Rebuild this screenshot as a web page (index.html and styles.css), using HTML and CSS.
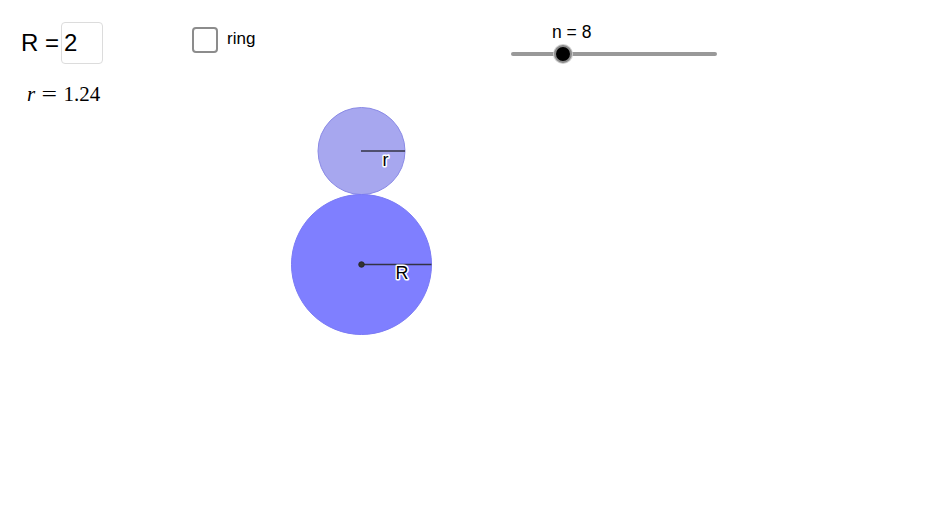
FILE: index.html
```html
<!DOCTYPE html>
<html>
<head>
<meta charset="utf-8">
<link rel="stylesheet" href="styles.css">
</head>
<body>
<div class="applet">
  <svg class="graphics" width="935" height="518" viewBox="0 0 935 518">
    <circle cx="361.5" cy="151" r="43.5" fill="#a7a7ef" stroke="#8a8ae6" stroke-width="1"/>
    <circle cx="361.5" cy="264.5" r="70" fill="#7f7fff" stroke="#7a7af5" stroke-width="1"/>
    <line x1="361" y1="151" x2="405" y2="151" stroke="#333344" stroke-width="1.6"/>
    <line x1="361" y1="264.5" x2="431.5" y2="264.5" stroke="#333344" stroke-width="1.6"/>
    <circle cx="361.5" cy="264.5" r="2.8" fill="#333" stroke="#222" stroke-width="0.8"/>
    <text class="lbl" x="382.5" y="166">r</text>
    <text class="lbl" x="395.5" y="279">R</text>
  </svg>

  <div class="input-widget">
    <span class="input-label">R =</span>
    <span class="input-box">2</span>
  </div>

  <label class="check-widget">
    <span class="check-box"></span>
    <span class="check-label">ring</span>
  </label>

  <div class="slider-widget">
    <div class="slider-caption">n = 8</div>
    <div class="slider-track">
      <span class="slider-knob"></span>
    </div>
  </div>

  <div class="formula"><i class="var">r</i><span class="eq">=</span><span>1.24</span></div>
</div>
</body>
</html>
```

FILE: styles.css
```css
html, body {
  margin: 0;
  padding: 0;
  background: #ffffff;
}
.applet {
  position: relative;
  width: 935px;
  height: 518px;
  overflow: hidden;
  font-family: "Liberation Sans", Arial, sans-serif;
  color: #000;
}
.graphics {
  position: absolute;
  left: 0;
  top: 0;
}
.lbl {
  font-family: "Liberation Sans", Arial, sans-serif;
  font-size: 18px;
  fill: #000;
  stroke: #fff;
  stroke-width: 3px;
  paint-order: stroke;
  stroke-linejoin: round;
}
.input-widget {
  position: absolute;
  left: 21px;
  top: 22px;
  display: flex;
  align-items: center;
  gap: 2px;
}
.input-label {
  font-size: 24px;
}
.input-box {
  box-sizing: border-box;
  width: 42px;
  height: 42px;
  border: 1px solid #dcdcdc;
  border-radius: 4px;
  font-size: 24px;
  line-height: 40px;
  padding-left: 2px;
}
.check-widget {
  position: absolute;
  left: 192px;
  top: 27px;
  display: flex;
  align-items: center;
  gap: 9px;
}
.check-box {
  box-sizing: border-box;
  width: 26px;
  height: 26px;
  border: 2px solid #8c8c8c;
  border-radius: 4px;
}
.check-label {
  font-size: 17px;
  margin-top: -2px;
}
.slider-widget {
  position: absolute;
  left: 511px;
  top: 22px;
  width: 206px;
}
.slider-caption {
  font-size: 17.5px;
  padding-left: 41px;
  line-height: 21px;
}
.slider-track {
  position: relative;
  margin-top: 9px;
  height: 4px;
  border-radius: 2px;
  background: #999999;
}
.slider-knob {
  position: absolute;
  left: 43px;
  top: -7px;
  box-sizing: border-box;
  width: 18px;
  height: 18px;
  border-radius: 50%;
  background: #000;
  border: 2px solid #8a8a8a;
  box-shadow: 0 0 0 1px #cfcfcf;
}
.formula {
  position: absolute;
  left: 27px;
  top: 81px;
  display: flex;
  align-items: baseline;
  font-family: "Liberation Serif", "DejaVu Serif", serif;
  font-size: 21px;
}
.formula .var {
  font-style: italic;
}
.formula .eq {
  font-size: 22px;
  transform: scaleX(1.25);
  margin: 0 8px 0 8px;
}
```
